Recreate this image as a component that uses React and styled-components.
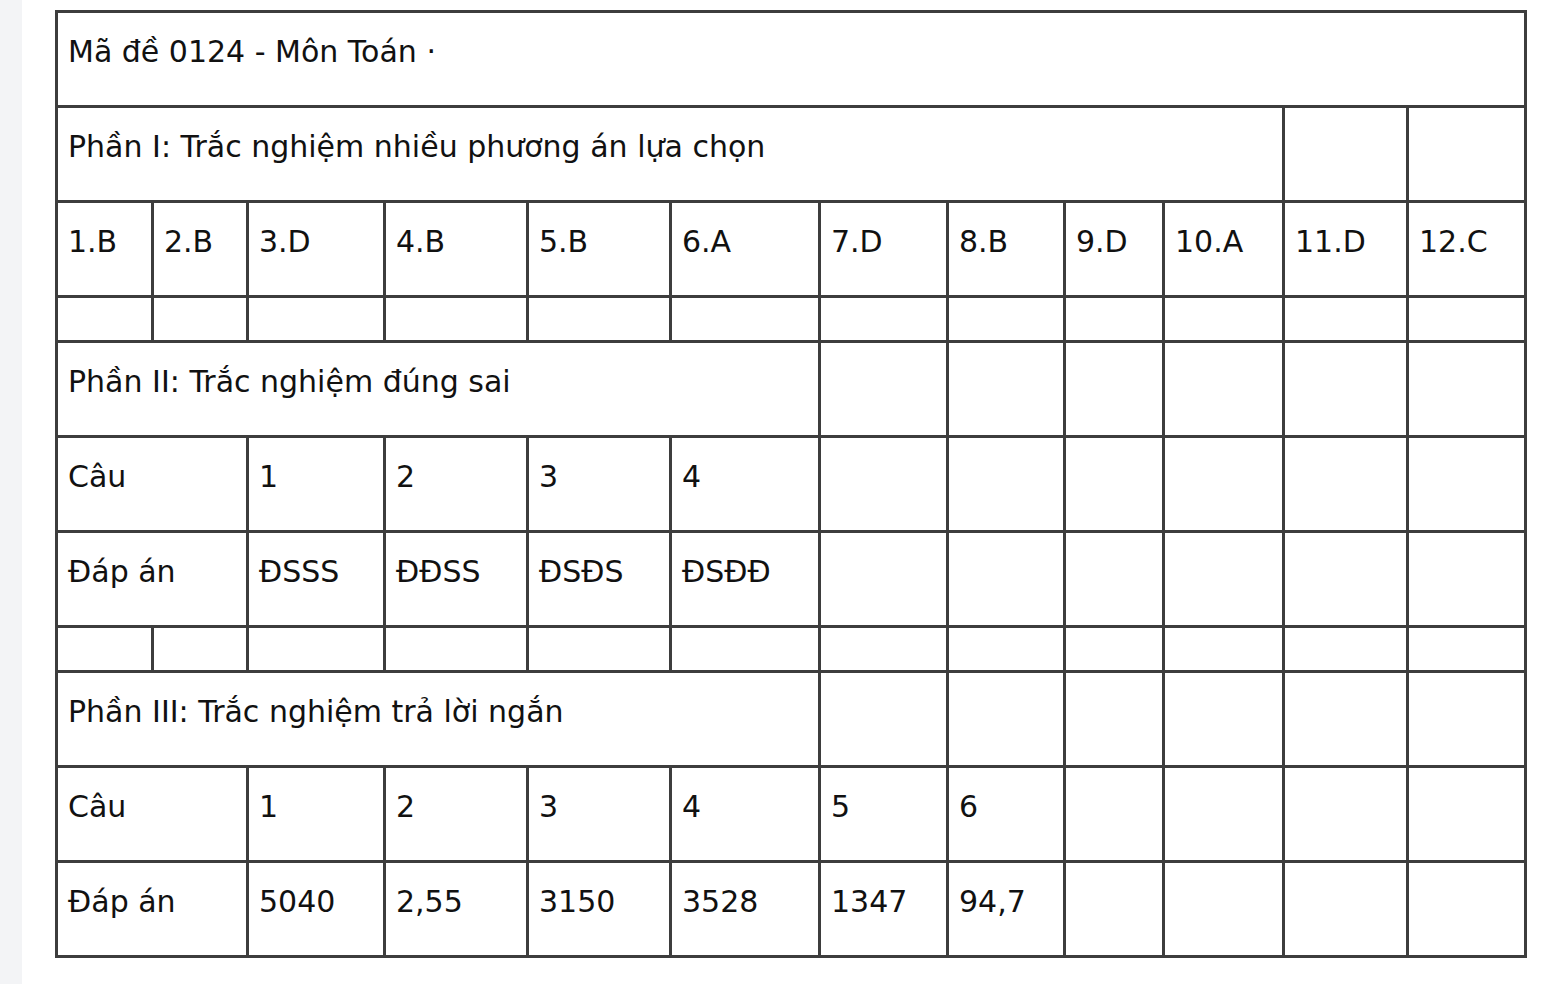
import styled, { createGlobalStyle } from "styled-components";

const GlobalStyle = createGlobalStyle`
  html, body {
    margin: 0;
    padding: 0;
    background: #fff;
  }
`;

const Page = styled.div`
  display: flex;
  min-height: 984px;
  background: #fff;
`;

const Rail = styled.div`
  width: 22px;
  flex-shrink: 0;
  background: #f3f4f6;
`;

const Content = styled.main`
  flex: 1;
  padding: 10px 0 0 33px;
`;

const Sheet = styled.table`
  border-collapse: collapse;
  table-layout: fixed;
  width: 1469px;
  font-family: "DejaVu Sans", Verdana, sans-serif;
  font-size: 30px;
  color: #111;
`;

const Row = styled.tr`
  height: ${(p) => (p.$short ? "45px" : "95px")};
`;

const Cell = styled.td`
  border: 3px solid #3d3d3d;
  padding: 23px 4px 0 10px;
  vertical-align: top;
  line-height: 32px;
  white-space: nowrap;
  overflow: hidden;
`;

const widths = [96, 95, 137, 143, 143, 149, 128, 117, 99, 120, 124, 118];

const blanks = (n) => Array.from({ length: n }, () => ({ text: "" }));

const rows = [
  { cells: [{ text: "Mã đề 0124 - Môn Toán ·", span: 12 }] },
  { cells: [{ text: "Phần I: Trắc nghiệm nhiều phương án lựa chọn", span: 10 }, ...blanks(2)] },
  {
    cells: ["1.B", "2.B", "3.D", "4.B", "5.B", "6.A", "7.D", "8.B", "9.D", "10.A", "11.D", "12.C"].map(
      (text) => ({ text })
    ),
  },
  { short: true, cells: blanks(12) },
  { cells: [{ text: "Phần II: Trắc nghiệm đúng sai", span: 6 }, ...blanks(6)] },
  { cells: [{ text: "Câu", span: 2 }, ...["1", "2", "3", "4"].map((text) => ({ text })), ...blanks(6)] },
  {
    cells: [
      { text: "Đáp án", span: 2 },
      ...["ĐSSS", "ĐĐSS", "ĐSĐS", "ĐSĐĐ"].map((text) => ({ text })),
      ...blanks(6),
    ],
  },
  { short: true, cells: blanks(12) },
  { cells: [{ text: "Phần III: Trắc nghiệm trả lời ngắn", span: 6 }, ...blanks(6)] },
  {
    cells: [{ text: "Câu", span: 2 }, ...["1", "2", "3", "4", "5", "6"].map((text) => ({ text })), ...blanks(4)],
  },
  {
    cells: [
      { text: "Đáp án", span: 2 },
      ...["5040", "2,55", "3150", "3528", "1347", "94,7"].map((text) => ({ text })),
      ...blanks(4),
    ],
  },
];

export default function App() {
  return (
    <Page>
      <GlobalStyle />
      <Rail />
      <Content>
        <Sheet>
          <colgroup>
            {widths.map((w, i) => (
              <col key={i} style={{ width: w }} />
            ))}
          </colgroup>
          <tbody>
            {rows.map((row, r) => (
              <Row key={r} $short={row.short}>
                {row.cells.map((c, i) => (
                  <Cell key={i} colSpan={c.span || 1}>
                    {c.text}
                  </Cell>
                ))}
              </Row>
            ))}
          </tbody>
        </Sheet>
      </Content>
    </Page>
  );
}
